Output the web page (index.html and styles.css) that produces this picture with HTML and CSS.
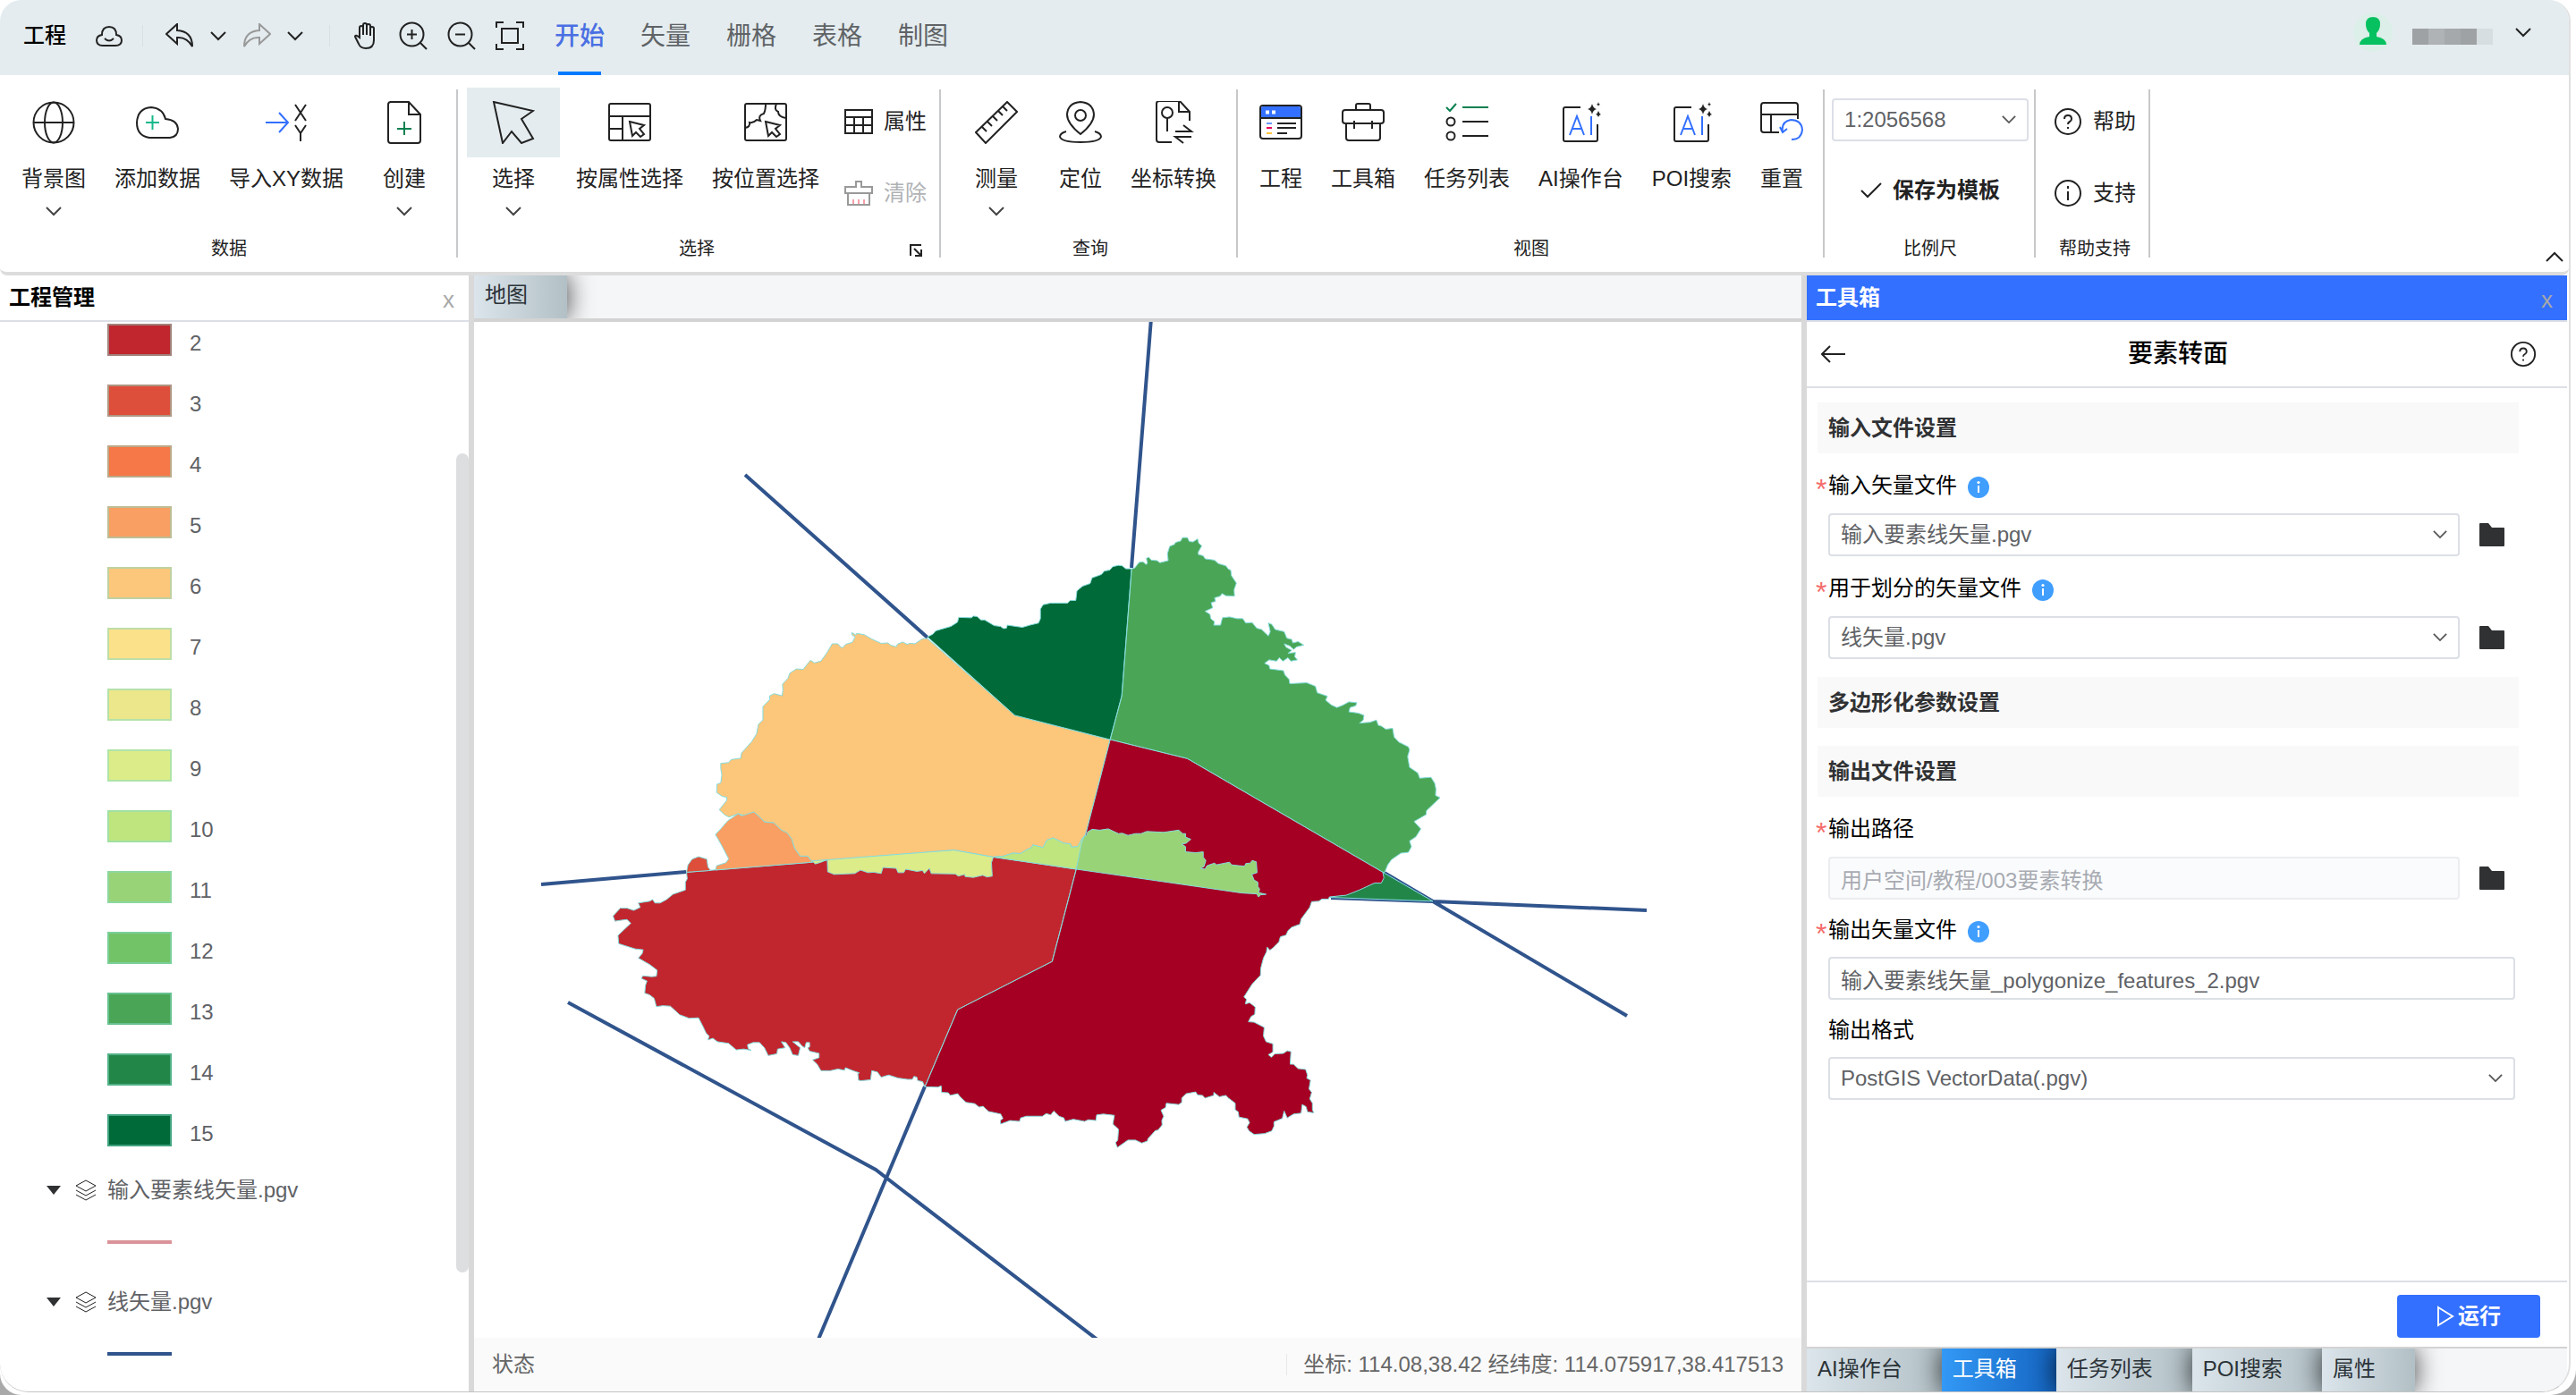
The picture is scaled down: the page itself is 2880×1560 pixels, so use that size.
FILE: index.html
```html
<!DOCTYPE html>
<html lang="zh-CN">
<head>
<meta charset="utf-8">
<title>工程</title>
<link rel="stylesheet" href="styles.css">
</head>
<body>
<svg class="sprite" aria-hidden="true">
  <symbol id="chev" viewBox="0 0 18 12"><path d="M1 2l8 8 8-8"/></symbol>
  <symbol id="layers" viewBox="0 0 24 24"><path d="M12 1l11 6-11 6L1 7zM1 12l11 6 11-6M1 17l11 6 11-6"/></symbol>
  <symbol id="info" viewBox="0 0 24 24"><circle cx="12" cy="12" r="12" fill="#409eff" stroke="none"/><path d="M12 10v8" stroke="#fff" stroke-width="2"/><circle cx="12" cy="6.500" r="1.600" fill="#fff" stroke="none"/></symbol>
  <symbol id="folder" viewBox="0 0 28 26"><path d="M0 1q0-1 1-1h9l4 5h13q1 0 1 1v19q0 1-1 1H1q-1 0-1-1z" fill="#303133" stroke="none"/></symbol>
  <symbol id="help" viewBox="0 0 32 32"><circle cx="16" cy="16" r="14"/><path d="M12 13q0-4 4-4t4 4q0 2-2 3t-2 3"/><path d="M16 22v2"/></symbol>
  <symbol id="ai" viewBox="0 0 48 48"><path d="M24 7H7q-2 0-2 2v34q0 2 2 2h34q2 0 2-2V26"/><path d="M12 38L20 17l8 21M15 31h10M36 17v21" stroke="#3370ff"/><path d="M37 3q1 5 5 6-4 1-5 6-1-5-5-6 4-1 5-6zM44 1q0 2 2 3-2 0-2 2 0-2-2-2 2-1 2-3zM44 11q1 3 3 4-2 0-3 3-1-3-3-3 2-1 3-4z" fill="#222" stroke="none"/></symbol>
</svg>
<div class="window">
  <header class="topbar">
    <button class="project">工程</button>
    <button class="tb cloud" aria-label="云"><svg width="30" height="24" viewBox="0 0 30 24"><path d="M8 23q-7 0-7-6 0-5 6-6 0-9 8-9t8 9q6 1 6 6 0 6-7 6zM10 15q5 5 10 0"/></svg></button>
    <i class="vsep"></i>
    <button class="tb" aria-label="撤销"><svg width="32" height="28" viewBox="0 0 32 28"><path d="M13 1L1 12l12 11v-7q11-1 17 10Q30 9 13 8z"/></svg></button>
    <button class="tb arrow" aria-label="撤销列表"><svg width="18" height="12"><use href="#chev"/></svg></button>
    <button class="tb redo" aria-label="重做"><svg width="32" height="28" viewBox="0 0 32 28"><path d="M19 1l12 11-12 11v-7Q8 15 2 26 2 9 19 8z"/></svg></button>
    <button class="tb arrow" aria-label="重做列表"><svg width="18" height="12"><use href="#chev"/></svg></button>
    <i class="vsep"></i>
    <div class="nav-tools">
      <button class="tb" aria-label="平移"><svg width="30" height="32" viewBox="0 0 30 32"><path d="M8 18V7q0-2 2-2t2 2v8V4q0-2 2-2t2 2v11V5q0-2 2-2t2 2v11V8q0-2 2-2t2 2v13q0 9-9 9-6 0-8-5L3 17q0-3 5 1z"/></svg></button>
      <button class="tb" aria-label="放大"><svg width="32" height="32" viewBox="0 0 32 32"><circle cx="14.500" cy="14.500" r="13"/><path d="M24 24l7 7M9 14.500h11M14.500 9v11"/></svg></button>
      <button class="tb" aria-label="缩小"><svg width="32" height="32" viewBox="0 0 32 32"><circle cx="14.500" cy="14.500" r="13"/><path d="M24 24l7 7M9 14.500h11"/></svg></button>
      <button class="tb" aria-label="全图"><svg width="32" height="32" viewBox="0 0 32 32"><path d="M1 7V1h8M23 1h8v6M31 25v6h-8M9 31H1v-6M7 8h18v16H7z"/></svg></button>
    </div>
    <nav class="menu">
      <a href="#start" class="on">开始</a><a href="#vector">矢量</a><a href="#raster">栅格</a><a href="#table">表格</a><a href="#layout">制图</a>
    </nav>
    <div class="user">
      <svg class="avatar" width="44" height="44" viewBox="0 0 44 44"><circle cx="22" cy="22" r="22" fill="#dcefe8" stroke="none"/><path d="M22 5q8 0 8 8 0 6-4 10v4q11 2 11 9H7q0-7 11-9v-4q-4-4-4-10 0-8 8-8z" fill="#07c160" stroke="none"/></svg>
      <span class="mosaic"><i></i><i></i><i></i><i></i><i></i></span>
      <svg width="18" height="12"><use href="#chev"/></svg>
    </div>
  </header>

  <section class="ribbon">
    <div class="group g-data">
      <div class="tools">
        <button class="tool split"><span class="ico"><svg width="48" height="48" viewBox="0 0 48 48"><circle cx="24" cy="24" r="22.500"/><ellipse cx="24" cy="24" rx="10" ry="22.500"/><path d="M2 24h44"/></svg></span>背景图<svg class="dd" width="18" height="12"><use href="#chev"/></svg></button>
        <button class="tool"><span class="ico"><svg width="48" height="48" viewBox="0 0 48 48"><path d="M15 41Q1 39 1 24 2 8 17 7q13 1 16 13 13 1 14 11 0 9-9 10z"/><path d="M11 24h15M18.500 16v16" stroke="#14b88a"/></svg></span>添加数据</button>
        <button class="tool"><span class="ico"><svg width="48" height="48" viewBox="0 0 48 48"><path d="M1 24h25M16 13l10 11-10 11" stroke="#3370ff"/><path d="M34 4l12 18M46 4L34 22M34 27l6 9 6-9M40 36v9"/></svg></span>导入XY数据</button>
        <button class="tool split"><span class="ico"><svg width="48" height="48" viewBox="0 0 48 48"><path d="M8 1h21l13 14v29q0 3-3 3H9q-3 0-3-3V4q0-3 3-3M29 1v14h13"/><path d="M16 31h16M24 23v15" stroke="#078050"/></svg></span>创建<svg class="dd" width="18" height="12"><use href="#chev"/></svg></button>
      </div>
      <h2>数据</h2>
    </div>
    <div class="group g-select">
      <div class="tools">
        <button class="tool split active"><span class="ico"><svg width="48" height="48" viewBox="0 0 48 48"><path d="M2 1l44 10-13 9 13 22-13 5-11-13-10 13z"/></svg></span>选择<svg class="dd" width="18" height="12"><use href="#chev"/></svg></button>
        <button class="tool"><span class="ico"><svg width="48" height="48" viewBox="0 0 48 48"><rect x="1" y="3" width="46" height="41" rx="2"/><path d="M1 17h46M16 17v27M1 31h15M24 23l16 4-5 4 5 6-4 3-5-5-4 4z"/></svg></span>按属性选择</button>
        <button class="tool"><span class="ico"><svg width="48" height="48" viewBox="0 0 48 48"><rect x="1" y="3" width="46" height="41" rx="2"/><path d="M1 30q6-1 5-6 4 1 8-3l4 1q-3-6 4-8 2-4 2-11M36 3q-3 7 2 9 0 6 9 7M24 23l16 4-5 4 5 6-4 3-5-5-4 4z"/></svg></span>按位置选择</button>
        <div class="side">
          <button class="mini"><svg width="32" height="28" viewBox="0 0 32 28"><path d="M1 1h30v26H1zM1 9h30M1 18h30M11 9v18M21 9v18"/></svg>属性</button>
          <button class="mini" disabled><svg width="32" height="28" viewBox="0 0 32 28"><path d="M1 7h12V1h6v6h12v7H1zM4 14v13h24V14"/><path d="M10 21v5M16 21v5M22 21v5" stroke="#f4a0a8"/></svg>清除</button>
        </div>
      </div>
      <h2>选择</h2>
      <button class="launch" aria-label="更多"><svg width="16" height="16" viewBox="0 0 16 16"><path d="M2 14V2h12M6 6l8 8M14 7v7H7"/></svg></button>
    </div>
    <div class="group g-query">
      <div class="tools">
        <button class="tool split"><span class="ico"><svg width="48" height="48" viewBox="0 0 48 48"><path d="M36 1l11 11-35 35L1 35zM8 29l5 5M14 23l5 5M20 17l5 5M26 11l5 5M31 6l5 5"/></svg></span>测量<svg class="dd" width="18" height="12"><use href="#chev"/></svg></button>
        <button class="tool"><span class="ico"><svg width="48" height="48" viewBox="0 0 48 48"><path d="M24 37Q9 25 9 15 10 2 24 1q14 1 15 14 0 10-15 22z"/><circle cx="24" cy="16" r="6"/><path d="M8 34q-7 2-7 6 2 6 23 6t23-6q0-4-7-6"/></svg></span>定位</button>
        <button class="tool"><span class="ico"><svg width="48" height="48" viewBox="0 0 48 48"><path d="M22 46H8q-3 0-3-3V3q0-3 3-3h23l11 12v10M30 1v11h12"/><circle cx="17" cy="13" r="6"/><path d="M17 19v15M26 34h18l-9-7M44 40H26l9 7"/></svg></span>坐标转换</button>
      </div>
      <h2>查询</h2>
    </div>
    <div class="group g-view">
      <div class="tools">
        <button class="tool"><span class="ico"><svg width="48" height="48" viewBox="0 0 48 48"><rect x="1" y="5" width="46" height="37" rx="3"/><path d="M2 8q0-2 2-2h40q2 0 2 2v11H2z" fill="#3370ff" stroke="none"/><path d="M1 19h46M20 25h21M20 30h21M20 36h11"/><path d="M7 12.500h4M14 12.500h4" stroke="#fff" stroke-width="4"/><path d="M8 25h6" stroke="#6b96ff"/><path d="M8 30h6" stroke="#e8005a"/><path d="M8 36h6" stroke="#ffc53d"/></svg></span>工程</button>
        <button class="tool"><span class="ico"><svg width="48" height="48" viewBox="0 0 48 48"><path d="M16 10V5q0-2 2-2h12q2 0 2 2v5M4 10h40q3 0 3 3v9q0 3-3 3H4q-3 0-3-3v-9q0-3 3-3zM5 25v16q0 3 3 3h32q3 0 3-3V25M14 22v9M34 22v9"/></svg></span>工具箱</button>
        <button class="tool"><span class="ico"><svg width="48" height="48" viewBox="0 0 48 48"><path d="M1 7l4 4 7-8M19 7h29" stroke="#078050"/><circle cx="6" cy="23" r="4.500"/><circle cx="6" cy="39" r="4.500"/><path d="M19 23h29M19 39h29"/></svg></span>任务列表</button>
        <button class="tool"><span class="ico"><svg width="48" height="48"><use href="#ai"/></svg></span>AI操作台</button>
        <button class="tool"><span class="ico"><svg width="48" height="48"><use href="#ai"/></svg></span>POI搜索</button>
        <button class="tool"><span class="ico"><svg width="48" height="48" viewBox="0 0 48 48"><path d="M21 35H4q-3 0-3-3V5q0-3 3-3h35q3 0 3 3v15M1 15h41M12 15v20M1 15v5"/><path d="M22 29l3 6 5-4M25 35q-2-12 9-14 12 0 13 11-1 11-12 11" stroke="#3370ff"/></svg></span>重置</button>
      </div>
      <h2>视图</h2>
    </div>
    <div class="group g-scale">
      <div class="tools col">
        <span class="pick"><select aria-label="比例尺"><option>1:2056568</option></select><svg width="16" height="11"><use href="#chev"/></svg></span>
        <button class="mini strong"><svg width="24" height="18" viewBox="0 0 24 18"><path d="M1 9l7 7L23 1"/></svg>保存为模板</button>
      </div>
      <h2>比例尺</h2>
    </div>
    <div class="group g-help">
      <div class="tools">
        <div class="side">
          <button class="mini"><svg width="32" height="32"><use href="#help"/></svg>帮助</button>
          <button class="mini"><svg width="32" height="32" viewBox="0 0 32 32"><circle cx="16" cy="16" r="14"/><path d="M16 14v10M16 8v3"/></svg>支持</button>
        </div>
      </div>
      <h2>帮助支持</h2>
    </div>
    <button class="collapse" aria-label="收起"><svg width="20" height="12" viewBox="0 0 20 12"><path d="M1 11l9-9 9 9"/></svg></button>
  </section>

  <main class="work">
    <aside class="tree-panel">
      <div class="panel-head"><h3>工程管理</h3><button class="x">x</button></div>
      <div class="tree">
        <ul class="legend">
          <li><i class="sw c2"></i><span>2</span></li><li><i class="sw c3"></i><span>3</span></li><li><i class="sw c4"></i><span>4</span></li><li><i class="sw c5"></i><span>5</span></li><li><i class="sw c6"></i><span>6</span></li><li><i class="sw c7"></i><span>7</span></li><li><i class="sw c8"></i><span>8</span></li><li><i class="sw c9"></i><span>9</span></li><li><i class="sw c10"></i><span>10</span></li><li><i class="sw c11"></i><span>11</span></li><li><i class="sw c12"></i><span>12</span></li><li><i class="sw c13"></i><span>13</span></li><li><i class="sw c14"></i><span>14</span></li><li><i class="sw c15"></i><span>15</span></li>
        </ul>
        <div class="layer"><i class="tri"></i><svg width="24" height="24"><use href="#layers"/></svg>输入要素线矢量.pgv</div>
        <div class="line-row"><i class="pink"></i></div>
        <div class="layer"><i class="tri"></i><svg width="24" height="24"><use href="#layers"/></svg>线矢量.pgv</div>
        <div class="line-row"><i class="navy"></i></div>
      </div>
      <i class="thumb"></i>
    </aside>

    <section class="map-panel">
      <div class="tabs"><button class="tab">地图</button></div>
      <div class="canvas">
        <svg class="map" viewBox="530 360 1484 1136" preserveAspectRatio="xMidYMid slice">
          <g class="roads">
            <path d="M1287 356L1265 635M833 531L1037 713M605 989L767 975M784 974h8M635 1121L979 1308 1228 1499M1034 1215L914 1500M1546 975L1602 1008 1819 1136M1488 1004L1602 1008 1841 1018"/>
          </g>
          <g class="areas" transform="translate(600 560) scale(.42092 .48469)">
            <path fill="#c1262f" d="M398 857L730 834 772 828 1108 806 1213 822 1433 850 1369 1063 1118 1174 1031 1352 1025 1340 1012 1338 1010 1330 1002 1328 998 1335 985 1335 960 1332 935 1325 915 1330 905 1318 890 1315 887 1336 862 1338 855 1337 853 1322 857 1320 840 1315 820 1308 818 1314 800 1311 780 1315 755 1315 745 1300 733 1290 750 1285 750 1275 725 1270 720 1262 725 1260 725 1250 716 1250 712 1262 705 1258 695 1248 680 1248 700 1262 695 1280 680 1278 672 1262 662 1250 650 1248 660 1262 640 1265 638 1276 615 1280 605 1262 592 1250 575 1250 560 1255 562 1264 570 1268 550 1265 530 1267 510 1252 480 1248 468 1240 455 1244 458 1235 450 1228 443 1215 430 1193 405 1194 380 1186 355 1166 335 1165 318 1167 312 1148 300 1140 287 1136 289 1118 293 1108 278 1102 282 1096 305 1098 318 1097 320 1083 300 1070 270 1055 280 1045 283 1036 262 1034 218 1022 216 1003 235 987 250 975 240 966 222 968 208 970 203 958 222 940 240 940 258 945 275 938 270 928 300 924 308 920 314 928 328 928 345 920 362 908 395 898 395 880 400 872z"/>
            <path fill="#fcc67b" d="M1038 318l-13 0-20 12-14-1-7 2-12-5-14 5-3 6-15-4-7-5-18 1-25-10-20-10-20-3-2 4-11-6 1 6 8 4-8 13-17 4-8 8-5-1-8-8-15 0-15 22-15 18-17 4-11-6-19 21-18-1-18 10-4 11-15 14 1 14-2 13-21-5-12 5 0 9-18 16 0 31-12 10-5 22-13 18-27 26-2 12-25 3-7 7-21 2 0 12 3 14-3 19-10 3-1 19 15 9 12 2 0 7-20 22 15 12 11 5L535 722 555 727 577 718 590 728 605 741 630 743 650 760 665 768 677 780 685 802 700 820 720 820 730 832 1108 806 1213 822 1240 820 1265 813 1285 814 1300 806 1315 800 1318 794 1345 800 1355 783 1372 778 1400 790 1418 792 1420 799 1437 798 1450 778 1457 772 1523 551 1270 495z"/>
            <path fill="#f99f63" d="M508 738L522 730 535 722 545 727 577 718 590 728 605 741 630 743 650 760 665 766 677 780 685 802 700 820 720 820 732 834 475 852 478 842 503 835 510 826 490 793 475 770 490 756z"/>
            <path fill="#dd4f3b" d="M398 857L402 840 413 827 430 821 452 827 455 845 462 853z"/>
            <path fill="#dcec89" d="M732 831L1108 806 1213 822 1208 835 1210 866 1196 868 1185 864 1160 869 1138 867 1137 862 1120 866 1112 861 1048 860 1043 848 1030 860 1025 853 1010 855 980 850 975 858 960 858 955 848 920 846 915 860 895 857 880 858 860 852 845 860 790 862 773 856 772 828 755 834 740 838z"/>
            <path fill="#bfe57f" d="M1213 822L1240 820 1265 813 1285 814 1300 806 1315 800 1318 794 1345 800 1355 783 1372 778 1400 790 1418 792 1420 799 1437 798 1450 778 1457 772 1433 850z"/>
            <path fill="#006a38" d="M1038 314L1052 308 1060 300 1100 290 1118 280 1121 269 1155 270 1160 266 1170 267 1180 275 1190 275 1215 288 1232 290 1240 295 1248 294 1250 287 1290 292 1310 287 1333 282 1338 272 1338 250 1345 240 1365 236 1410 236 1417 230 1432 230 1435 208 1450 197 1470 191 1475 178 1500 170 1508 162 1522 160 1530 152 1545 149 1555 150 1565 157 1580 157 1554 450 1523 551 1270 495z"/>
          </g>
          <g class="areas" transform="translate(1200 560) scale(.42092 .48469)">
            <path fill="#238649" d="M822 857L955 924 678 915 725 907 760 895 805 880 820 878z"/>
            <path fill="#4aa656" d="M155 157L163 155 175 142 185 141 193 147 197 144 194 133 200 130 207 137 222 138 230 143 252 138 250 122 256 105 268 101 272 96 285 93 290 85 303 85 308 94 318 95 330 88 333 98 341 104 332 118 332 124 345 127 350 134 375 137 385 145 405 150 412 158 418 160 420 173 433 190 427 205 428 220 405 219 395 214 390 220 375 224 378 232 366 235 370 247 350 255 363 262 365 272 375 279 373 287 391 287 396 270 415 268 435 272 450 272 458 282 475 281 487 294 500 297 518 312 523 302 518 282 527 285 536 297 560 302 567 317 580 320 583 328 597 325 612 333 593 337 585 343 575 335 560 330 565 338 580 345 570 352 590 350 588 360 595 367 578 370 570 362 557 370 547 362 540 370 520 367 508 375 520 380 522 388 558 392 562 402 573 412 575 422 620 420 643 428 648 443 675 451 670 460 685 471 700 477 715 472 732 464 753 466 750 473 735 477 732 487 757 490 772 495 770 506 760 513 788 511 805 506 810 518 818 520 830 527 848 525 852 545 865 557 890 568 893 575 888 590 893 615 915 628 920 640 950 638 960 652 963 665 962 680 974 685 950 705 938 715 937 724 905 740 923 757 910 775 893 785 898 798 890 811 870 813 845 828 835 840 827 857 822 857 303 595 98 551 129 450z"/>
            <path fill="#a50023" d="M98 551L303 595 822 857 825 870 818 882 800 882 760 898 725 910 680 914 678 919 660 919 652 924 633 925 628 938 605 965 602 977 580 984 570 992 565 1002 550 1006 546 1018 530 1032 522 1037 515 1030 513 1041 505 1055 498 1078 497 1095 475 1115 453 1145 460 1150 457 1161 468 1158 483 1168 482 1185 472 1190 465 1202 480 1203 507 1215 505 1235 512 1248 530 1253 530 1272 518 1278 526 1284 535 1276 558 1275 568 1269 578 1271 576 1300 585 1300 597 1310 617 1312 622 1325 620 1332 630 1337 626 1357 633 1365 628 1380 635 1390 635 1405 639 1412 622 1410 618 1398 608 1393 605 1413 585 1415 568 1424 560 1408 555 1425 533 1433 533 1443 527 1454 508 1460 480 1462 467 1454 461 1445 468 1435 463 1426 440 1422 438 1410 430 1405 430 1390 412 1378 405 1372 388 1375 373 1365 373 1372 350 1378 343 1372 330 1371 325 1364 300 1368 288 1378 288 1388 280 1393 247 1390 245 1400 233 1406 240 1420 235 1430 236 1440 225 1452 218 1453 198 1472 197 1477 182 1482 165 1475 145 1475 117 1492 112 1481 118 1475 120 1450 105 1438 109 1418 80 1415 62 1417 60 1430 40 1428 30 1432 0 1427-22 1432-25 1424-38 1420-52 1408-60 1417-72 1414-82 1420-125 1420-140 1424-143 1432-168 1430-193 1438-194 1430-187 1425-193 1415-225 1409-240 1397-250 1399-262 1391-285 1388-300 1376-307 1368-327 1372-332 1366-350 1365-351 1350-360 1353-394 1352-307 1174-56 1063 8 850 32 772z"/>
            <path fill="#99d377" d="M8 850L22 790 28 775 35 772 38 764 50 758 70 760 93 757 105 762 120 768 130 767 145 772 165 768 180 768 195 763 240 765 280 760 290 768 298 768 298 776 312 781 300 790 288 792 298 798 298 810 325 812 345 810 345 822 352 830 347 844 338 848 350 850 355 842 375 836 380 840 415 834 420 840 440 842 455 843 458 837 470 836 475 830 486 833 488 858 474 862 480 875 490 880 490 890 495 896 492 904 512 908 498 909 492 914 487 907 448 905z"/>
          </g>
        </svg>
      </div>
      <footer class="status"><span>状态</span><span class="coord">坐标: 114.08,38.42 经纬度: 114.075917,38.417513</span></footer>
    </section>

    <aside class="toolbox">
      <div class="panel-head blue"><h3>工具箱</h3><button class="x">x</button></div>
      <div class="tool-head">
        <button class="tb" aria-label="返回"><svg width="28" height="20" viewBox="0 0 28 20"><path d="M27 10H2M10 1l-9 9 9 9"/></svg></button>
        <h3>要素转面</h3>
        <button class="tb" aria-label="帮助"><svg width="30" height="30"><use href="#help"/></svg></button>
      </div>
      <form class="form">
        <h4>输入文件设置</h4>
        <div class="field">
          <label for="f1"><b>*</b>输入矢量文件<svg width="24" height="24"><use href="#info"/></svg></label>
          <div class="row"><span class="pick"><select id="f1"><option>输入要素线矢量.pgv</option></select><svg width="16" height="11"><use href="#chev"/></svg></span><button type="button" class="tb" aria-label="选择文件"><svg width="28" height="26"><use href="#folder"/></svg></button></div>
        </div>
        <div class="field">
          <label for="f2"><b>*</b>用于划分的矢量文件<svg width="24" height="24"><use href="#info"/></svg></label>
          <div class="row"><span class="pick"><select id="f2"><option>线矢量.pgv</option></select><svg width="16" height="11"><use href="#chev"/></svg></span><button type="button" class="tb" aria-label="选择文件"><svg width="28" height="26"><use href="#folder"/></svg></button></div>
        </div>
        <h4 class="next">多边形化参数设置</h4>
        <h4 class="next">输出文件设置</h4>
        <div class="field">
          <label for="f3"><b>*</b>输出路径</label>
          <div class="row"><span class="pick"><input id="f3" type="text" value="用户空间/教程/003要素转换" disabled></span><button type="button" class="tb" aria-label="选择路径"><svg width="28" height="26"><use href="#folder"/></svg></button></div>
        </div>
        <div class="field plain">
          <label for="f4"><b>*</b>输出矢量文件<svg width="24" height="24"><use href="#info"/></svg></label>
          <div class="row"><span class="pick"><input id="f4" type="text" value="输入要素线矢量_polygonize_features_2.pgv"></span></div>
        </div>
        <div class="field plain">
          <label for="f5">输出格式</label>
          <div class="row"><span class="pick"><select id="f5"><option>PostGIS VectorData(.pgv)</option></select><svg width="16" height="11"><use href="#chev"/></svg></span></div>
        </div>
      </form>
      <div class="run-bar"><button class="run"><svg width="20" height="24" viewBox="0 0 20 24"><path d="M2 2l16 10L2 22z"/></svg>运行</button></div>
      <div class="tabs bottom"><button class="tab">AI操作台</button><button class="tab on">工具箱</button><button class="tab">任务列表</button><button class="tab">POI搜索</button><button class="tab">属性</button></div>
    </aside>
  </main>
</div>
</body>
</html>
```
FILE: styles.css
```css
* { box-sizing: border-box; }

html { background: #a9a9a9; }

body {
  margin: 0;
  height: 100vh;
  border-radius: 0 0 28px 24px;
  background: #fff;
  font: 24px/36px "Liberation Sans", "Noto Sans CJK SC", sans-serif;
  color: #222;
}

h2, h3, h4, ul { margin: 0; padding: 0; }
ul { list-style: none; }
i { display: block; }

button, select, input { font: inherit; color: inherit; }
button { margin: 0; padding: 0; border: 0; background: none; }

svg { display: block; flex: none; fill: none; stroke: #222; stroke-width: 2; }
.sprite { position: absolute; width: 0; height: 0; }

.window {
  display: flex;
  flex-direction: column;
  height: calc(100vh - 3px);
  margin-right: 6px;
  border-right: 2px solid #e0e0e0;
  border-bottom: 1px solid #c4c4c4;
  border-radius: 24px 24px 32px 32px;
  overflow: hidden;
}

/* Top bar */
.topbar {
  display: flex;
  align-items: center;
  height: 84px;
  padding: 0 42px 4px 26px;
  background: #e4ecef;
}
.tb { display: flex; align-items: center; justify-content: center; }
.project { color: #000; font-weight: 500; }
.cloud { margin: 0 22px 0 33px; }
.vsep { width: 1px; height: 24px; background: #d8e0e4; }
.vsep + .tb { margin-left: 25px; }
.arrow { margin: 0 18px; }
.redo svg { stroke: #999; }
.topbar .arrow + .vsep { margin-left: 11px; }
.nav-tools { display: flex; gap: 22px; margin: 0 34px 0 25px; }
.menu { display: flex; gap: 40px; height: 84px; margin-bottom: -4px; }
.menu a {
  position: relative;
  width: 56px;
  color: #5f6366;
  font-size: 28px;
  line-height: 82px;
  text-decoration: none;
}
.menu .on { color: #4a6fe3; font-weight: 500; }
.menu .on::after {
  content: "";
  position: absolute;
  left: 4px;
  right: 4px;
  bottom: 0;
  height: 4px;
  background: #007bff;
}
.user { display: flex; align-items: center; margin: 0 0 8px auto; }
.mosaic { display: flex; align-self: flex-start; margin: 18px 25px 0 22px; }
.mosaic i { width: 18px; height: 18px; background: #9fa2a5; }
.mosaic i:nth-child(2) { background: #afb3b6; }
.mosaic i:nth-child(3) { background: #a5a9ac; }
.mosaic i:nth-child(5) { background: #d6dee1; }

/* Ribbon */
.ribbon {
  position: relative;
  display: flex;
  height: 224px;
  padding: 14px 0 16px;
  border-bottom: 4px solid #dcdcdc;
  border-radius: 0 0 8px 8px;
}
.group { position: relative; display: flex; flex-direction: column; }
.group::after {
  content: "";
  position: absolute;
  top: 2px;
  right: 0;
  bottom: 0;
  width: 2px;
  background: #c6c8ca;
}
.g-data { padding: 0 8px; }
.g-select { padding: 0 16px 0 10px; }
.g-query { padding: 0 8px 0 10px; }
.g-view { padding: 0 8px; }
.g-scale { padding: 0 8px; }
.g-help { padding: 0 16px 0 20px; }
.tools { display: flex; flex: 1; }
.tools.col { flex-direction: column; align-items: center; }
.group h2 { font-size: 20px; font-weight: 400; line-height: 20px; text-align: center; }
.tool {
  display: flex;
  flex-direction: column;
  align-items: center;
  justify-content: flex-start;
  padding: 0 16px;
  white-space: nowrap;
}
.tool.split { width: 104px; margin-right: 2px; padding: 0; }
.g-data .split { margin-right: 0; }
.ico {
  display: flex;
  align-items: center;
  justify-content: center;
  width: 48px;
  height: 78px;
  margin-bottom: 6px;
}
.active .ico { width: 104px; background: #e4ecef; }
.dd { margin-top: 12px; stroke: #444; }
.side { display: flex; flex-direction: column; gap: 36px; padding-top: 16px; }
.g-select .side { padding-left: 12px; }
.mini { display: flex; align-items: center; gap: 12px; height: 44px; line-height: 44px; white-space: nowrap; }
.mini:disabled { color: #b0b2b5; }
.mini:disabled svg { stroke: #999; }
.strong { margin-top: 33px; font-weight: 700; }
.launch { position: absolute; right: 20px; bottom: 0; }
.collapse { position: absolute; right: 6px; bottom: 11px; }

/* Form controls */
.pick { position: relative; display: flex; flex: 1; }
.pick select, .pick input {
  width: 100%;
  height: 48px;
  padding: 0 12px;
  border: 2px solid #dcdfe6;
  border-radius: 4px;
  background: #fff;
  color: #606266;
  line-height: 36px;
  appearance: none;
}
.pick input:disabled { background: #fafbfd; border-color: #ebedf0; color: #a8abb2; }
.pick svg { position: absolute; right: 14px; top: 18px; stroke: #555; pointer-events: none; }
.g-scale .pick { flex: none; width: 220px; margin-top: 12px; }

/* Work area */
.work {
  display: grid;
  grid-template-columns: 530px minmax(0, 1fr) 856px;
  flex: 1;
  min-height: 0;
  padding-right: 2px;
}
.panel-head {
  display: flex;
  justify-content: space-between;
  align-items: center;
  flex: none;
  height: 52px;
  padding: 0 16px 0 10px;
  border-bottom: 2px solid #dcdfe6;
}
.panel-head h3 { color: #000; font-size: 24px; }
.x { padding-top: 4px; color: #a8a8a8; font-size: 26px; }
.panel-head.blue { background: #3370ff; }
.panel-head.blue h3 { color: #fff; }

.tree-panel {
  position: relative;
  display: flex;
  flex-direction: column;
  min-height: 0;
  border-right: 6px solid #d9d9d9;
}
.tree { flex: 1; min-height: 0; overflow: hidden; color: #606266; }
.legend { margin-top: -14px; }
.legend li { display: flex; align-items: center; gap: 20px; height: 68px; padding-left: 120px; }
.legend span { padding-top: 8px; }
.sw { width: 72px; height: 36px; border: 2px solid rgba(130, 220, 200, .5); }
.c2 { background-color: #c1262f; }
.c3 { background-color: #dd4f3b; }
.c4 { background-color: #f67747; }
.c5 { background-color: #f99f63; }
.c6 { background-color: #fcc67b; }
.c7 { background-color: #fbe189; }
.c8 { background-color: #ebe78a; }
.c9 { background-color: #dcec89; }
.c10 { background-color: #bfe57f; }
.c11 { background-color: #99d377; }
.c12 { background-color: #72c268; }
.c13 { background-color: #4aa656; }
.c14 { background-color: #238649; }
.c15 { background-color: #006a38; }
.layer { display: flex; align-items: center; height: 66px; padding-left: 52px; }
.layer svg { margin: 0 12px 0 16px; stroke-width: 1; }
.tri { border: 8px solid transparent; border-top: 10px solid #303133; border-bottom: 0; }
.line-row { height: 59px; padding: 23px 0 0 120px; }
.line-row i { width: 72px; height: 4px; }
.pink { background: #d99399; }
.navy { background: #30548c; }
.thumb {
  position: absolute;
  top: 199px;
  right: 0;
  bottom: 133px;
  width: 14px;
  border-radius: 7px;
  background: #dddee0;
}

.tabs {
  display: flex;
  flex: none;
  height: 52px;
  border-bottom: 4px solid #d3d3d3;
  background: #f5f6f8;
  overflow: hidden;
}
.tab {
  padding: 0 44px 4px 12px;
  background: linear-gradient(90deg, #dbe5eb, #b2c0c6);
  box-shadow: 0 0 28px rgba(0, 0, 0, .75);
  color: #2b3338;
  white-space: nowrap;
}
.tab.on { background: linear-gradient(90deg, #3399f6, #1464c0); color: #fff; }
.tabs.bottom { height: 50px; border-bottom: 0; border-top: 2px solid #d3d3d3; }
.bottom .tab { padding-bottom: 2px; }

.map-panel { display: flex; flex-direction: column; min-width: 0; min-height: 0; }
.canvas { position: relative; flex: 1; min-height: 0; background: #fff; }
.map { position: absolute; inset: 0; width: 100%; height: 100%; }
.roads { stroke: #30548c; stroke-width: 4; }
.areas { stroke: #86dcdc; stroke-width: 1; }
.areas path { vector-effect: non-scaling-stroke; stroke-linejoin: round; }
.status {
  display: flex;
  align-items: center;
  justify-content: space-between;
  height: 60px;
  padding: 0 20px;
  background: #fafafa;
  color: #666;
}
.coord { padding-left: 18px; border-left: 1px solid #e8e8e8; line-height: 24px; }

/* Toolbox */
.toolbox { display: flex; flex-direction: column; min-height: 0; border-left: 6px solid #d9d9d9; }
.tool-head {
  display: flex;
  align-items: center;
  justify-content: space-between;
  height: 74px;
  padding: 0 34px 0 16px;
  border-bottom: 2px solid #dcdfe6;
}
.tool-head h3 { color: #000; font-size: 28px; font-weight: 500; }
.form { flex: 1; min-height: 0; padding: 16px 54px 0 12px; overflow: hidden; }
.form h4 { padding: 0 12px; background: #f9f9f9; color: #303133; font-size: 24px; line-height: 57px; }
.form .next { margin-top: 20px; }
.field { padding: 18px 0 0 12px; }
.field label { display: flex; align-items: center; height: 36px; margin-bottom: 13px; color: #000; }
.field b { width: 14px; margin: 8px 0 0 -14px; color: #f56c6c; font-size: 32px; font-weight: 400; }
.field label svg { margin: 4px 0 0 12px; }
.field .row { display: flex; align-items: center; gap: 22px; padding-right: 16px; }
.field.plain { padding-top: 16px; }
.plain label { margin-bottom: 12px; }
.field.plain .row { padding-right: 4px; }
.run-bar {
  display: flex;
  justify-content: flex-end;
  padding: 14px 30px 10px 0;
  border-top: 2px solid #dcdfe6;
}
.run {
  display: flex;
  align-items: center;
  justify-content: center;
  gap: 4px;
  width: 160px;
  height: 48px;
  border-radius: 4px;
  background: #3370ff;
  color: #fff;
  font-weight: 700;
}
.run svg { stroke: #fff; }
```
